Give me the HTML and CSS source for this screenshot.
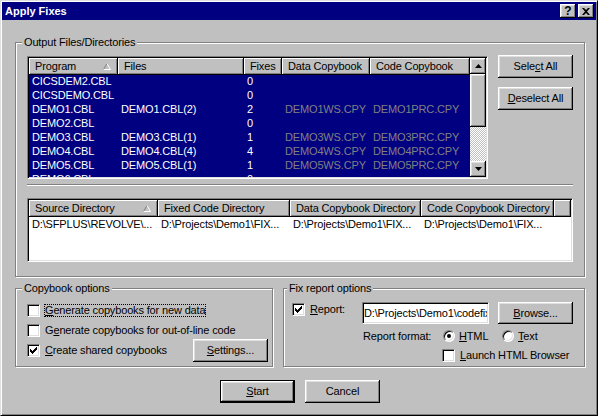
FILE: index.html
```html
<!DOCTYPE html>
<html lang="en">
<head>
    <meta charset="UTF-8">
    <title>Apply Fixes</title>
    <link rel="stylesheet" href="styles.css">
</head>
<body>
    <div class="window">
        <div class="titlebar">
            <span class="title">Apply Fixes</span>
            <div class="title-buttons">
                <span class="tbtn">?</span>
                <span class="tbtn">
                    <svg width="8" height="7" viewBox="0 0 8 7"><path d="M0 0h2l2 2 2-2h2L5 3.5 8 7H6L4 5 2 7H0l3-3.5z"/></svg>
                </span>
            </div>
        </div>

        <div class="dialog">
            <fieldset class="group group-output">
                <legend>Output Files/Directories</legend>
                <div class="output-top">
                    <div class="listview list-programs">
                        <div class="lv-main">
                            <div class="lv-header">
                                <span class="lv-head-cell">Program
                                    <svg class="sort" width="8" height="7" viewBox="0 0 8 7"><path d="M0.5 6.5L4 0.5" stroke="#808080" fill="none"/><path d="M4 0.5L7.5 6.5M0.5 6.5H7.5" stroke="#fff" fill="none"/></svg>
                                </span>
                                <span class="lv-head-cell">Files</span>
                                <span class="lv-head-cell">Fixes</span>
                                <span class="lv-head-cell">Data Copybook</span>
                                <span class="lv-head-cell">Code Copybook</span>
                            </div>
                            <div class="lv-row"><span>CICSDEM2.CBL</span><span></span><span>0</span><span></span><span></span></div>
                            <div class="lv-row"><span>CICSDEMO.CBL</span><span></span><span>0</span><span></span><span></span></div>
                            <div class="lv-row"><span>DEMO1.CBL</span><span>DEMO1.CBL(2)</span><span>2</span><span class="dim">DEMO1WS.CPY</span><span class="dim">DEMO1PRC.CPY</span></div>
                            <div class="lv-row"><span>DEMO2.CBL</span><span></span><span>0</span><span></span><span></span></div>
                            <div class="lv-row"><span>DEMO3.CBL</span><span>DEMO3.CBL(1)</span><span>1</span><span class="dim">DEMO3WS.CPY</span><span class="dim">DEMO3PRC.CPY</span></div>
                            <div class="lv-row"><span>DEMO4.CBL</span><span>DEMO4.CBL(4)</span><span>4</span><span class="dim">DEMO4WS.CPY</span><span class="dim">DEMO4PRC.CPY</span></div>
                            <div class="lv-row"><span>DEMO5.CBL</span><span>DEMO5.CBL(1)</span><span>1</span><span class="dim">DEMO5WS.CPY</span><span class="dim">DEMO5PRC.CPY</span></div>
                            <div class="lv-row"><span>DEMO6.CBL</span><span></span><span>0</span><span></span><span></span></div>
                        </div>
                        <div class="scrollbar">
                            <span class="sb-btn"><svg width="7" height="4" viewBox="0 0 7 4"><path d="M3.5 0L7 4H0z"/></svg></span>
                            <span class="sb-thumb"></span>
                            <span class="sb-track"></span>
                            <span class="sb-btn"><svg width="7" height="4" viewBox="0 0 7 4"><path d="M0 0h7L3.5 4z"/></svg></span>
                        </div>
                    </div>
                    <div class="side-buttons">
                        <button class="btn">Sele<u>c</u>t All</button>
                        <button class="btn"><u>D</u>eselect All</button>
                    </div>
                </div>

                <div class="separator"></div>

                <div class="listview list-dirs">
                    <div class="lv-main">
                        <div class="lv-header dirs">
                            <span class="lv-head-cell">Source Directory
                                <svg class="sort" width="8" height="7" viewBox="0 0 8 7"><path d="M0.5 6.5L4 0.5" stroke="#808080" fill="none"/><path d="M4 0.5L7.5 6.5M0.5 6.5H7.5" stroke="#fff" fill="none"/></svg>
                            </span>
                            <span class="lv-head-cell">Fixed Code Directory</span>
                            <span class="lv-head-cell">Data Copybook Directory</span>
                            <span class="lv-head-cell">Code Copybook Directory</span>
                            <span class="lv-head-cell"></span>
                        </div>
                        <div class="lv-row dirs plain">
                            <span>D:\SFPLUS\REVOLVE\...</span>
                            <span>D:\Projects\Demo1\FIX...</span>
                            <span>D:\Projects\Demo1\FIX...</span>
                            <span>D:\Projects\Demo1\FIX...</span>
                            <span></span>
                        </div>
                    </div>
                </div>
            </fieldset>

            <div class="options-row">
                <fieldset class="group group-copybook">
                    <legend>Copybook options</legend>
                    <div class="check-row">
                        <span class="checkbox"></span>
                        <span class="check-label focus"><u>G</u>enerate copybooks for new data</span>
                    </div>
                    <div class="check-row">
                        <span class="checkbox"></span>
                        <span class="check-label">G<u>e</u>nerate copybooks for out-of-line code</span>
                    </div>
                    <div class="check-row">
                        <span class="checkbox">
                            <svg width="7" height="7" viewBox="0 0 7 7"><path d="M6 0h1v1H6zM5 1h2v1H5zM0 2h1v1H0zM4 2h3v1H4zM0 3h2v1H0zM3 3h3v1H3zM0 4h5v1H0zM1 5h3v1H1zM2 6h1v1H2z"/></svg>
                        </span>
                        <span class="check-label"><u>C</u>reate shared copybooks</span>
                        <button class="btn settings-btn"><u>S</u>ettings...</button>
                    </div>
                </fieldset>

                <fieldset class="group group-report">
                    <legend>Fix report options</legend>
                    <div class="report-row">
                        <div class="report-check">
                            <span class="checkbox">
                                <svg width="7" height="7" viewBox="0 0 7 7"><path d="M6 0h1v1H6zM5 1h2v1H5zM0 2h1v1H0zM4 2h3v1H4zM0 3h2v1H0zM3 3h3v1H3zM0 4h5v1H0zM1 5h3v1H1zM2 6h1v1H2z"/></svg>
                            </span>
                            <span class="check-label"><u>R</u>eport:</span>
                        </div>
                        <input class="text-field" type="text" value="D:\Projects\Demo1\codefix" readonly>
                        <button class="btn browse-btn"><u>B</u>rowse...</button>
                    </div>
                    <div class="format-row">
                        <span class="format-label">Report format:</span>
                        <span class="radio-item">
                            <span class="radio"><span class="dot"></span></span>
                            <span class="check-label radio-label"><u>H</u>TML</span>
                        </span>
                        <span class="radio-item">
                            <span class="radio"></span>
                            <span class="check-label radio-label"><u>T</u>ext</span>
                        </span>
                    </div>
                    <div class="launch-row">
                        <span class="checkbox"></span>
                        <span class="check-label"><u>L</u>aunch HTML Browser</span>
                    </div>
                </fieldset>
            </div>

            <div class="dialog-buttons">
                <button class="btn default-btn"><u>S</u>tart</button>
                <button class="btn">Cancel</button>
            </div>
        </div>
    </div>
</body>
</html>
```

FILE: styles.css
```css
body {
    margin: 0;
    font: 11px/13px "Liberation Sans", Arial, sans-serif;
    letter-spacing: -0.15px;
    color: #000;
    background: #c0c0c0;
}

.window {
    width: 598px;
    height: 416px;
    box-sizing: border-box;
    background: #c0c0c0;
    border: 1px solid;
    border-color: #dfdfdf #000 #000 #dfdfdf;
    box-shadow: inset 1px 1px #fff, inset -1px -1px #808080;
    padding: 1px;
}

/* title bar */
.titlebar {
    height: 18px;
    background: #000080;
    color: #fff;
    font-weight: bold;
    letter-spacing: 0;
    display: flex;
    align-items: center;
    padding: 0 2px 0 3px;
}
.title-buttons {
    margin-left: auto;
    display: flex;
    gap: 2px;
}
.tbtn {
    width: 16px;
    height: 14px;
    box-sizing: border-box;
    display: flex;
    align-items: center;
    justify-content: center;
    background: #c0c0c0;
    color: #000;
    font-size: 12px;
    box-shadow: inset -1px -1px #000, inset 1px 1px #fff, inset -2px -2px #808080, inset 2px 2px #dfdfdf;
}

.dialog {
    padding: 16px 11px 0 13px;
}

/* group boxes */
.group {
    margin: 0;
    min-width: 0;
    box-sizing: border-box;
    border: 1px solid #808080;
    box-shadow: inset 1px 1px #fff, 1px 1px #fff;
}
.group legend {
    padding: 0 2px;
    margin-left: -5px;
    line-height: 13px;
    background: #c0c0c0;
}
.group-output {
    padding: 7px 11px 14px 11px;
}

/* raised buttons */
.btn {
    width: 75px;
    height: 23px;
    box-sizing: border-box;
    border: 0;
    padding: 0;
    background: #c0c0c0;
    font: inherit;
    letter-spacing: inherit;
    color: #000;
    box-shadow: inset -1px -1px #000, inset 1px 1px #fff, inset -2px -2px #808080, inset 2px 2px #dfdfdf;
}
.default-btn {
    border: 1px solid #000;
}

/* list views */
.output-top {
    display: flex;
    justify-content: space-between;
    align-items: flex-start;
}
.listview {
    box-sizing: border-box;
    border: 1px solid;
    border-color: #808080 #fff #fff #808080;
    box-shadow: inset 1px 1px #000, inset -1px -1px #dfdfdf;
    padding: 1px;
    display: flex;
}
.lv-main {
    flex: 1;
    min-width: 0;
    overflow: hidden;
}
.list-programs {
    width: 461px;
    height: 123px;
}
.list-programs .lv-main {
    background: #000080;
}
.list-dirs {
    height: 64px;
    margin-top: 12px;
    background: #fff;
}
.lv-header,
.lv-row {
    display: grid;
    grid-template-columns: 89px 126px 38px 88px 1fr;
}
.lv-header.dirs,
.lv-row.dirs {
    grid-template-columns: 129px 132px 131px 133px 1fr;
}
.lv-header {
    height: 17px;
}
.lv-head-cell {
    display: flex;
    align-items: center;
    padding: 0 7px 0 6px;
    background: #c0c0c0;
    white-space: nowrap;
    overflow: hidden;
    box-shadow: inset -1px -1px #000, inset 1px 1px #fff, inset -2px -2px #808080;
}
.lv-head-cell .sort {
    margin-left: auto;
    flex: none;
}
.lv-row {
    height: 14px;
    line-height: 13px;
    color: #fff;
}
.lv-row span {
    padding-left: 3px;
    white-space: nowrap;
    overflow: hidden;
}
.lv-row .dim {
    color: #808080;
}
.lv-row.plain {
    color: #000;
    line-height: 14px;
}

/* scrollbar */
.scrollbar {
    width: 16px;
    flex: none;
    display: flex;
    flex-direction: column;
    background: repeating-conic-gradient(#c0c0c0 0 25%, #fff 0 50%) 0 0 / 2px 2px;
}
.sb-btn,
.sb-thumb {
    background: #c0c0c0;
    box-shadow: inset -1px -1px #000, inset 1px 1px #fff, inset -2px -2px #808080, inset 2px 2px #dfdfdf;
}
.sb-btn {
    height: 16px;
    display: flex;
    align-items: center;
    justify-content: center;
}
.sb-thumb {
    height: 53px;
}
.sb-track {
    flex: 1;
}

.side-buttons {
    display: flex;
    flex-direction: column;
    gap: 9px;
    margin-top: -1px;
}

.separator {
    margin-top: 5px;
    border-top: 1px solid #808080;
    border-bottom: 1px solid #fff;
}

/* option groups */
.options-row {
    display: flex;
    gap: 10px;
    margin-top: 5px;
}
.group-copybook {
    width: 258px;
    padding: 5px 4px 6px 11px;
}
.group-report {
    flex: 1;
    padding: 7px 8px 4px 8px;
}

.check-row {
    display: flex;
    align-items: center;
    height: 20px;
}
.checkbox {
    width: 13px;
    height: 13px;
    box-sizing: border-box;
    flex: none;
    display: flex;
    align-items: center;
    justify-content: center;
    background: #fff;
    border: 1px solid;
    border-color: #808080 #fff #fff #808080;
    box-shadow: inset 1px 1px #000, inset -1px -1px #dfdfdf;
}
.check-label {
    margin-left: 4px;
    padding: 0 1px;
    white-space: nowrap;
}
.focus {
    outline: 1px dotted #000;
    outline-offset: -1px;
}
.settings-btn {
    margin-left: auto;
}

.report-row {
    display: flex;
    align-items: flex-start;
    height: 22px;
}
.report-check {
    width: 70px;
    display: flex;
    align-items: center;
    margin-top: 1px;
}
.text-field {
    width: 127px;
    height: 22px;
    box-sizing: border-box;
    margin: 0;
    padding: 0 1px;
    font: inherit;
    letter-spacing: inherit;
    color: #000;
    background: #fff;
    border: 1px solid;
    border-color: #808080 #fff #fff #808080;
    box-shadow: inset 1px 1px #000, inset -1px -1px #dfdfdf;
    outline: none;
}
.browse-btn {
    height: 22px;
    margin-left: 9px;
}

.format-row {
    display: flex;
    align-items: center;
    height: 20px;
    margin-top: 2px;
    padding-left: 71px;
}
.format-label {
    width: 80px;
}
.radio-item {
    display: flex;
    align-items: center;
    width: 59px;
}
.radio {
    width: 12px;
    height: 12px;
    box-sizing: border-box;
    flex: none;
    border-radius: 50%;
    background: #fff;
    border: 1px solid;
    border-color: #808080 #fff #fff #808080;
    box-shadow: inset 1px 1px #000, inset -1px -1px #dfdfdf;
    display: flex;
    align-items: center;
    justify-content: center;
}
.radio .dot {
    width: 4px;
    height: 4px;
    border-radius: 50%;
    background: #000;
}
.radio-label {
    margin-left: 3px;
}

.launch-row {
    display: flex;
    align-items: center;
    height: 14px;
    margin-top: 2px;
    padding-left: 150px;
}

.dialog-buttons {
    display: flex;
    justify-content: center;
    gap: 10px;
    margin-top: 13px;
}
```
